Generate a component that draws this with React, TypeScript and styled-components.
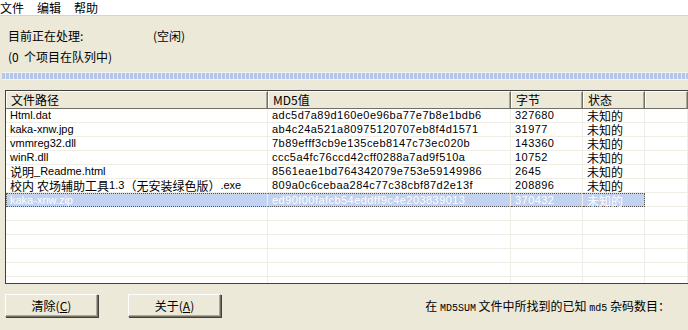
import React from "react";
import styled, { createGlobalStyle } from "styled-components";

const Global = createGlobalStyle`
  html, body { margin: 0; padding: 0; }
  body {
    background: #ece9d8;
    font-family: "Noto Sans CJK SC", "Liberation Sans", sans-serif;
    font-size: 12px;
    color: #000;
  }
`;

const Window = styled.div`
  width: 688px;
  height: 330px;
  overflow: hidden;
  background: #ece9d8;
  display: flex;
  flex-direction: column;
`;

const MenuBar = styled.div`
  height: 15px;
  background: #ffffff;
  border-bottom: 1px solid #d8d5c8;
  display: flex;
  gap: 13px;
  align-items: center;
`;

const MenuItem = styled.span`
  font-size: 12px;
  line-height: 15px;
`;

const Status = styled.div`
  padding: 12px 0 0 8px;
  display: flex;
  flex-direction: column;
  gap: 5px;
`;

const StatusRow = styled.div`
  display: flex;
  height: 16px;
  line-height: 16px;
  white-space: pre;
`;

const StatusLabel = styled.span`
  width: 145px;
`;

const Progress = styled.div`
  margin: 7px 0 0 2px;
  height: 6px;
  border-top: 1px solid #f4f3ee;
  border-bottom: 1px solid #f4f3ee;
  background: repeating-linear-gradient(
    90deg,
    #b6c6e9 0px,
    #b6c6e9 3px,
    #e4e9f5 3px,
    #e4e9f5 4px
  );
`;

const List = styled.div`
  margin: 10px 0 0 5px;
  height: 192px;
  border-top: 1px solid #404040;
  border-left: 1px solid #404040;
  border-bottom: 1px solid #404040;
  background: #fff;
  display: flex;
  flex-direction: column;
  overflow: hidden;
`;

const cols = "262px 243px 72px 62px 1fr";

const Header = styled.div`
  display: grid;
  grid-template-columns: ${cols};
  height: 17px;
  background: #ece9d8;
  border-bottom: 1px solid #716f64;
  flex: none;
`;

const HeadCell = styled.div`
  padding-left: 4px;
  line-height: 16px;
  font-size: 12px;
  border-top: 1px solid #fff;
  border-left: 1px solid #fff;
  border-right: 1px solid #716f64;
  box-shadow: inset -1px 0 0 #aca899;
`;

const Row = styled.div`
  display: grid;
  grid-template-columns: ${cols};
  height: 14px;
  flex: none;
  font-family: "Liberation Sans", "Noto Sans CJK SC", sans-serif;
  font-size: 11px;
`;

const Cell = styled.div<{ $sel?: boolean; $first?: boolean; $last?: boolean; $wide?: boolean }>`
  box-sizing: border-box;
  height: 14px;
  padding-left: 4px;
  display: flex;
  align-items: center;
  white-space: pre;
  border-right: 1px solid #efede4;
  border-bottom: 1px solid #efede4;
  letter-spacing: ${(p) => (p.$wide ? "0.45px" : "0")};
  background: ${(p) => (p.$sel ? "#c2d3f1" : "transparent")};
  color: ${(p) => (p.$sel ? "#fff" : "#000")};
  ${(p) => (p.$sel ? `border-top: 1px dotted #555; border-bottom: 1px dotted #555;` : "")}
  ${(p) => (p.$sel && p.$first ? `border-left: 1px dotted #555; padding-left: 3px;` : "")}
  ${(p) => (p.$sel && p.$last ? `border-right: 1px dotted #555;` : "")}
`;

const Latin = styled.span`
  line-height: 13px;
  white-space: pre;
`;

const CjkName = styled.span`
  font-family: "Noto Sans CJK SC", sans-serif;
  font-size: 12px;
  line-height: 13px;
  white-space: pre;
`;

const Bottom = styled.div`
  display: flex;
  align-items: center;
  padding: 10px 0 0 5px;
`;

const Button = styled.div<{ $gap?: number }>`
  width: 91px;
  height: 21px;
  margin-right: ${(p) => p.$gap ?? 0}px;
  background: #ece9d8;
  border-top: 1px solid #fff;
  border-left: 1px solid #fff;
  border-right: 1px solid #716f64;
  border-bottom: 1px solid #716f64;
  box-shadow: inset -1px -1px 0 #aca899, 1px 1px 0 #404040;
  display: flex;
  align-items: center;
  justify-content: center;
  font-size: 12px;
`;

const Mono = styled.span`
  font-family: "Liberation Mono", monospace;
  font-size: 10px;
`;

const U = styled.span`
  text-decoration: underline;
`;

const Info = styled.div`
  margin-left: auto;
  margin-right: 18px;
  font-size: 12px;
  white-space: pre;
`;

const rows = [
  ["Html.dat", "adc5d7a89d160e0e96ba77e7b8e1bdb6", "327680"],
  ["kaka-xnw.jpg", "ab4c24a521a80975120707eb8f4d1571", "31977"],
  ["vmmreg32.dll", "7b89efff3cb9e135ceb8147c73ec020b", "143360"],
  ["winR.dll", "ccc5a4fc76ccd42cff0288a7ad9f510a", "10752"],
  ["说明_Readme.html", "8561eae1bd764342079e753e59149986", "2645"],
  ["校内 农场辅助工具1.3（无安装绿色版）.exe", "809a0c6cebaa284c77c38cbf87d2e13f", "208896"],
  ["kaka-xnw.zip", "ed90f00fafcb54eddff9c4e203839013", "370432"],
];

function Name({ text }: { text: string }) {
  const parts = text.split(/([^\x00-\x7f]+)/).filter(Boolean);
  return (
    <>
      {parts.map((p, i) =>
        /[^\x00-\x7f]/.test(p) ? <CjkName key={i}>{p}</CjkName> : <Latin key={i}>{p}</Latin>
      )}
    </>
  );
}

export default function App() {
  return (
    <Window>
      <Global />
      <MenuBar>
        <MenuItem>文件</MenuItem>
        <MenuItem>编辑</MenuItem>
        <MenuItem>帮助</MenuItem>
      </MenuBar>
      <Status>
        <StatusRow>
          <StatusLabel>目前正在处理:</StatusLabel>
          <span>(空闲)</span>
        </StatusRow>
        <StatusRow>(0  个项目在队列中)</StatusRow>
      </Status>
      <Progress />
      <List>
        <Header>
          <HeadCell>文件路径</HeadCell>
          <HeadCell>MD5值</HeadCell>
          <HeadCell>字节</HeadCell>
          <HeadCell>状态</HeadCell>
          <HeadCell />
        </Header>
        {rows.map((r, i) => {
          const sel = i === rows.length - 1;
          return (
            <Row key={i}>
              <Cell $sel={sel} $first>
                <Name text={r[0]} />
              </Cell>
              <Cell $sel={sel} $wide>
                <Latin>{r[1]}</Latin>
              </Cell>
              <Cell $sel={sel} $wide>
                <Latin>{r[2]}</Latin>
              </Cell>
              <Cell $sel={sel} $last>
                <CjkName>未知的</CjkName>
              </Cell>
              <Cell />
            </Row>
          );
        })}
        {Array.from({ length: 7 }).map((_, i) => (
          <Row key={"e" + i}>
            <Cell />
            <Cell />
            <Cell />
            <Cell />
            <Cell />
          </Row>
        ))}
      </List>
      <Bottom>
        <Button $gap={30}>
          清除(<U>C</U>)
        </Button>
        <Button>
          关于(<U>A</U>)
        </Button>
        <Info>
          在 <Mono>MD5SUM</Mono> 文件中所找到的已知 <Mono>md5</Mono> 杂码数目：
        </Info>
      </Bottom>
    </Window>
  );
}
